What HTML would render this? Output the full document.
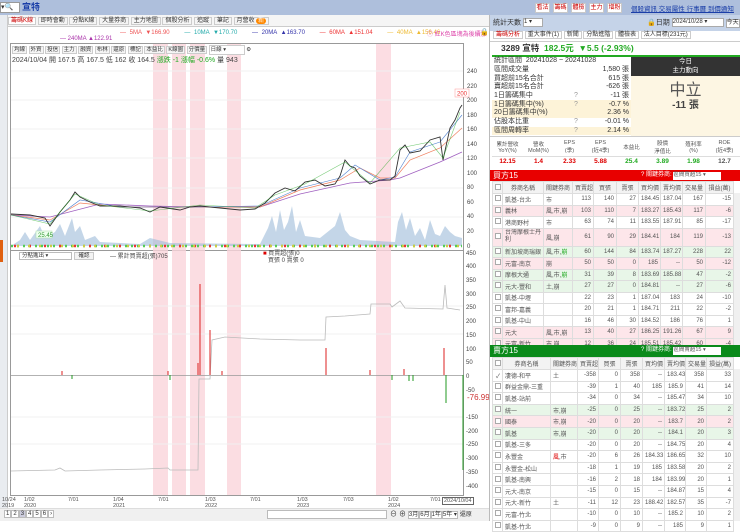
<!DOCTYPE html>
<html><head><meta charset="utf-8">
<style>
*{margin:0;padding:0;box-sizing:border-box}
body{width:740px;height:521px;overflow:hidden;background:#fff;font-family:"Liberation Sans","Noto Sans CJK TC",sans-serif;font-size:7px;color:#333;position:relative}
.a{position:absolute}
.btn{position:absolute;background:#f3f3f3;border:1px solid #c8c8c8;font-size:6px;line-height:9px;text-align:center;color:#333}
table{border-collapse:collapse;table-layout:fixed}
.tb td{border:1px solid #ddd;font-size:6px;white-space:nowrap;overflow:hidden;padding:0 2px;text-align:right;color:#555}
.tb td.l{text-align:left}
.tb td.c{text-align:center}
.r{color:#d00}.g{color:#2a2}
.pk td{background:#fde6ea}.gr td{background:#e8f6e8}
.cb{display:inline-block;width:6px;height:6px;border:1px solid #aaa;background:#fff}
.st td{font-size:7px;height:8.7px;line-height:8px;color:#333;padding:0 2px;white-space:nowrap;overflow:visible}
</style></head><body>

<div class="a" style="left:0;top:0;width:740px;height:15px;background:#aebfdc"></div>
<div class="a" style="left:0;top:2px;width:20px;height:11px;background:#fff;border:1px solid #999;font-size:7px;line-height:9px">▾🔍</div>
<div class="a" style="left:22px;top:2px;font-size:9px;font-weight:bold;color:#1a3ea8;line-height:11px">宣特</div>
<div class="btn" style="left:535px;top:3px;width:15px;height:10px;color:#c00;background:#fff">看法</div>
<div class="btn" style="left:553px;top:3px;width:15px;height:10px;color:#c00;background:#fff">籌碼</div>
<div class="btn" style="left:571px;top:3px;width:15px;height:10px;color:#c00;background:#fff">體檢</div>
<div class="btn" style="left:589px;top:3px;width:15px;height:10px;color:#c00;background:#fff">主力</div>
<div class="btn" style="left:607px;top:3px;width:15px;height:10px;color:#c00;background:#fff">增粉</div>
<div class="a" style="left:631px;top:3px;font-size:6.5px;color:#1a3ea8;text-decoration:underline;white-space:nowrap">個股資訊 交易屬性 行事曆 到價通知</div>

<div class="a" style="left:0;top:15px;width:8px;height:493px;background:#e9ecf0;border-right:1px solid #ccc"></div>
<div class="a" style="left:0;top:240px;width:3px;height:22px;background:#e06010"></div>

<div class="a" style="left:8px;top:15px;width:482px;height:12px;background:#f5f5f5;border-bottom:1px solid #ccc"></div>
<div class="a" style="left:8px;top:16px;font-size:6px;line-height:10px;white-space:nowrap">
<span style="border:1px solid #ccc;background:#fff;color:#c00;padding:0 2px">籌碼K線</span> <span style="border:1px solid #ccc;padding:0 2px">即時會動</span> <span style="border:1px solid #ccc;padding:0 2px">分點K線</span> <span style="border:1px solid #ccc;padding:0 2px">大量券商</span> <span style="border:1px solid #ccc;padding:0 2px">主力地圖</span> <span style="border:1px solid #ccc;padding:0 2px">個股分析</span> <span style="border:1px solid #ccc;padding:0 2px">追蹤</span> <span style="border:1px solid #ccc;padding:0 2px">筆記</span> <span style="border:1px solid #ccc;padding:0 2px">月營收 <span style="background:#f80;color:#fff;border-radius:4px;padding:0 2px">新</span></span></div>

<div class="a" style="left:120px;top:30px;font-size:6px;white-space:nowrap;word-spacing:2px"><span style="color:#e55">— 5MA ▼166.90</span>&nbsp;&nbsp;&nbsp; <span style="color:#2aa">— 10MA ▼170.70</span>&nbsp;&nbsp;&nbsp; <span style="color:#33a">— 20MA ▲163.70</span>&nbsp;&nbsp;&nbsp; <span style="color:#e33">— 60MA ▲151.04</span>&nbsp;&nbsp;&nbsp; <span style="color:#eb3">— 40MA ▲156.46</span></div>
<div class="a" style="left:427px;top:29px;font-size:6px;color:#d4a;white-space:nowrap">ⓘ 紅K色區塊為後續漲</div>
<div class="a" style="left:480px;top:28px;font-size:7px">🔒</div>
<div class="a" style="left:60px;top:36px;font-size:6px;color:#a3a;white-space:nowrap">— 240MA ▲122.91</div>

<svg class="a" style="left:0;top:0" width="490" height="521">
<rect x="10.5" y="43.5" width="453" height="207" fill="none" stroke="#999"/>
<rect x="10.5" y="250.5" width="453" height="245" fill="none" stroke="#999"/>
<g fill="#fbd5dc" opacity="0.8">
<rect x="153" y="44" width="15" height="451"/><rect x="172" y="44" width="14" height="451"/><rect x="190" y="44" width="15" height="451"/><rect x="227" y="44" width="14" height="451"/><rect x="376" y="44" width="15" height="451"/>
</g>
<g stroke="#f0f0f0"><line x1="11" y1="71" x2="463" y2="71"/><line x1="11" y1="100" x2="463" y2="100"/><line x1="11" y1="129" x2="463" y2="129"/><line x1="11" y1="158" x2="463" y2="158"/><line x1="11" y1="188" x2="463" y2="188"/><line x1="11" y1="217" x2="463" y2="217"/>
<line x1="11" y1="306" x2="463" y2="306"/><line x1="11" y1="334" x2="463" y2="334"/><line x1="11" y1="417" x2="463" y2="417"/><line x1="11" y1="444" x2="463" y2="444"/></g>
<polygon fill="#9dbbd8" opacity="0.6" points="11,246 20,240 25,232 30,240 40,226 45,238 55,232 60,224 65,236 72,218 75,232 80,226 85,240 95,236 100,242 140,244 150,238 170,243 260,244 268,228 272,216 276,232 280,210 284,230 288,222 292,206 296,232 300,220 305,236 320,238 335,226 340,212 345,230 350,236 360,240 395,242 398,222 402,212 406,230 410,218 415,236 420,228 425,240 430,220 435,234 440,236 445,226 450,232 455,236 462,238 462,246"/>
<g><path d="M11 246 H462" stroke="#5c5" stroke-width="2.5" stroke-dasharray="2 4"/><path d="M14 246 H462" stroke="#e33" stroke-width="2.5" stroke-dasharray="2 13"/><path d="M17 246 H462" stroke="#cc4" stroke-width="2.5" stroke-dasharray="2 9"/></g>
<polyline fill="none" stroke="#a060c0" stroke-width="0.8" points="11,215 50,217 100,204 150,206 200,207 260,207 300,194 350,183 390,180 400,178 440,162 462,152"/>
<polyline fill="none" stroke="#f08060" stroke-width="0.7" points="11,215 50,220 80,203 120,207 200,207 260,207 300,190 340,180 360,168 380,178 395,178 410,160 440,148 462,128"/>
<polyline fill="none" stroke="#5080d0" stroke-width="0.6" points="11,215 50,222 80,200 120,207 200,207 260,206 300,188 340,178 355,165 380,180 395,177 410,152 440,142 462,115"/>
<polyline fill="none" stroke="#333" stroke-width="0.9" points="11,214 30,215 45,218 50,226 60,212 70,200 75,192 80,197 90,202 100,206 120,206 140,208 150,212 160,207 180,210 190,207 200,206 220,208 240,210 255,209 265,203 275,193 285,188 295,191 305,182 315,180 325,186 335,184 340,176 345,160 350,166 355,168 360,176 370,184 380,180 390,180 395,176 400,150 405,145 410,153 420,151 430,140 440,137 443,160 450,128 455,120 460,108 462,105"/>
<polyline fill="none" stroke="#2a2" stroke-width="0.6" opacity="0.6" points="11,215 50,224 75,194 100,205 150,211 200,205 255,208 275,195 305,184 345,162 370,183 400,148 430,142 443,158 460,112"/>
<line x1="11" y1="375.5" x2="463" y2="375.5" stroke="#999" stroke-width="0.7"/>
<polyline fill="none" stroke="#bbb" stroke-width="0.8" points="11,471 55,470 60,468 65,471 100,470 145,469 168,468 170,470 198,470 199,379 210,379 212,340 225,337 260,339 300,340 325,340 326,317 345,316 370,314 371,304 390,304 392,307 400,301 405,308 443,309 445,285 447,308 460,310"/>
<g stroke="#d22" stroke-width="1"><line x1="200" y1="375" x2="200" y2="284"/><line x1="210" y1="375" x2="210" y2="330"/><line x1="198" y1="375" x2="198" y2="363"/><line x1="326" y1="375" x2="326" y2="348"/><line x1="444" y1="375" x2="444" y2="348"/><line x1="222" y1="375" x2="222" y2="371"/><line x1="168" y1="375" x2="168" y2="371"/><line x1="370" y1="375" x2="370" y2="370"/><line x1="404" y1="375" x2="404" y2="369"/><line x1="62" y1="375" x2="62" y2="371"/></g>
<g stroke="#292" stroke-width="1"><line x1="446" y1="375" x2="446" y2="403"/><line x1="463" y1="375" x2="463" y2="470"/><line x1="392" y1="375" x2="392" y2="380"/><line x1="409" y1="375" x2="409" y2="381"/><line x1="413" y1="375" x2="413" y2="381"/><line x1="170" y1="375" x2="170" y2="380"/><line x1="72" y1="375" x2="72" y2="379"/></g>
<g font-size="6" fill="#444" font-family="Liberation Sans">
<text x="467" y="73">240</text><text x="467" y="88">220</text><text x="467" y="102">200</text><text x="467" y="117">180</text><text x="467" y="131">160</text><text x="467" y="146">140</text><text x="467" y="160">120</text><text x="467" y="175">100</text><text x="467" y="189">80</text><text x="467" y="204">60</text><text x="467" y="218">40</text><text x="467" y="233">20</text><text x="467" y="248">0</text>
<text x="466" y="255">450</text><text x="466" y="268">400</text><text x="466" y="282">350</text><text x="466" y="296">300</text><text x="466" y="309">250</text><text x="466" y="323">200</text><text x="466" y="337">150</text><text x="466" y="351">100</text><text x="466" y="364">50</text><text x="466" y="378">0</text><text x="466" y="392">-50</text><text x="466" y="419">-150</text><text x="466" y="433">-200</text><text x="466" y="446">-250</text><text x="466" y="460">-300</text><text x="466" y="474">-350</text><text x="466" y="488">-400</text>
</g>
<text x="467" y="400" font-size="8" fill="#c33" font-family="Liberation Sans">-76.99</text>
<rect x="455" y="89" width="14" height="8" fill="#fff" stroke="#f99" stroke-width="0.5"/><text x="457" y="95.5" font-size="6" fill="#e33">200</text>
<rect x="36" y="231" width="16" height="7" fill="#efe" stroke="#ada" stroke-width="0.5"/><text x="38" y="237" font-size="6" fill="#393">25.45</text>
</svg>

<div class="a" style="left:12px;top:45px;font-size:5.5px;line-height:8px;white-space:nowrap"><span style="border:1px solid #ccc;background:#f5f5f5;padding:0 1px">均線</span> <span style="border:1px solid #ccc;background:#f5f5f5;padding:0 1px">外資</span> <span style="border:1px solid #ccc;background:#f5f5f5;padding:0 1px">投信</span> <span style="border:1px solid #ccc;background:#f5f5f5;padding:0 1px">主力</span> <span style="border:1px solid #ccc;background:#f5f5f5;padding:0 1px">融資</span> <span style="border:1px solid #ccc;background:#f5f5f5;padding:0 1px">布林</span> <span style="border:1px solid #ccc;background:#f5f5f5;padding:0 1px">還原</span> <span style="border:1px solid #ccc;background:#f5f5f5;padding:0 1px">標記</span> <span style="border:1px solid #ccc;background:#f5f5f5;padding:0 1px">本益比</span> <span style="border:1px solid #ccc;background:#f5f5f5;padding:0 1px">K線圖</span> <span style="border:1px solid #ccc;background:#f5f5f5;padding:0 1px">分價量</span> <span style="border:1px solid #ccc;background:#fff;padding:0 1px;display:inline-block;width:36px">日線 ▾</span> ⚙</div>
<div class="a" style="left:12px;top:55px;font-size:7px;white-space:nowrap;color:#444">2024/10/04 開 167.5 高 167.5 低 162 收 164.5 <span class="g">漲跌 -1</span> <span class="g">漲幅 -0.6%</span> 量 943</div>
<div class="a" style="left:19px;top:252px;width:53px;height:8px;border:1px solid #bbb;font-size:5.5px;line-height:6px;padding-left:2px;background:#fff">分點進出 ▾</div>
<div class="btn" style="left:74px;top:252px;width:20px;height:8px;line-height:6px;font-size:5.5px">確認</div>
<div class="a" style="left:110px;top:251px;font-size:6px;color:#444;white-space:nowrap">— 累計買賣超(張)705</div>
<div class="a" style="left:263px;top:251px;font-size:6px;color:#444;line-height:7px;white-space:nowrap"><span class="r">■</span> 買賣超(張)0<br>&nbsp;&nbsp;&nbsp;買張 0 賣張 0</div>

<div class="a" style="left:0;top:497px;width:490px;font-size:5.5px;line-height:6px;color:#555">
<span class="a" style="left:2px">10/24<br>2019</span><span class="a" style="left:24px">1/02<br>2020</span><span class="a" style="left:68px">7/01</span><span class="a" style="left:113px">1/04<br>2021</span><span class="a" style="left:158px">7/01</span><span class="a" style="left:205px">1/03<br>2022</span><span class="a" style="left:250px">7/01</span><span class="a" style="left:297px">1/03<br>2023</span><span class="a" style="left:343px">7/03</span><span class="a" style="left:388px">1/02<br>2024</span><span class="a" style="left:430px">7/01</span><span class="a" style="left:442px;border:1px solid #666;padding:0 1px;background:#fff;white-space:nowrap">2024/10/04</span></div>
<div class="a" style="left:0;top:508px;width:490px;height:13px;background:#f0f0f0;border-top:1px solid #ddd"></div>
<div class="a" style="left:4px;top:510px;font-size:6px;line-height:8px;white-space:nowrap"><span style="border:1px solid #bbb;padding:0 1px;background:#fff">1</span><span style="border:1px solid #bbb;padding:0 1px;background:#fff">2</span><span style="border:1px solid #bbb;padding:0 1px;background:#ccd">3</span><span style="border:1px solid #bbb;padding:0 1px;background:#fff">4</span><span style="border:1px solid #bbb;padding:0 1px;background:#fff">5</span><span style="border:1px solid #bbb;padding:0 1px;background:#fff">6</span><span style="border:1px solid #bbb;padding:0 1px;background:#fff">›</span></div>
<div class="a" style="left:267px;top:510px;width:120px;height:9px;border:1px solid #bbb;background:#fff"></div>
<div class="a" style="left:390px;top:509px;font-size:7px;white-space:nowrap">⊖ ⊕ <span style="font-size:6px;border:1px solid #bbb;background:#fff">3月</span><span style="font-size:6px;border:1px solid #bbb;background:#fff">6月</span><span style="font-size:6px;border:1px solid #bbb;background:#fff">1年</span><span style="font-size:6px;border:1px solid #bbb;background:#fff">5年 ▾</span> <span style="font-size:6px">還原</span></div>

<div class="a" style="left:490px;top:15px;width:250px;height:16px;background:#c5d3e8"></div>
<div class="a" style="left:493px;top:18px;font-size:7px;line-height:10px;white-space:nowrap">統計天數 <span style="display:inline-block;width:20px;height:9px;background:#fff;border:1px solid #aaa;vertical-align:middle;font-size:6px;line-height:7px">1 ▾</span></div>
<div class="a" style="left:647px;top:18px;font-size:7px;line-height:10px;white-space:nowrap">🔒日期 <span style="display:inline-block;width:52px;height:9px;background:#fff;border:1px solid #aaa;vertical-align:middle;font-size:6px;line-height:7px">2024/10/28 ▾</span> <span style="display:inline-block;border:1px solid #aaa;background:#fff;font-size:6px;line-height:7px">今天</span></div>
<div class="a" style="left:490px;top:31px;width:250px;height:11px;border-bottom:1px solid #ccc;font-size:6px;line-height:9px;white-space:nowrap;padding-left:3px"><span style="border:1px solid #ccc;color:#c00;padding:0 2px">籌碼分析</span> <span style="border:1px solid #ccc;padding:0 2px">重大事件(1)</span> <span style="border:1px solid #ccc;padding:0 2px">新聞</span> <span style="border:1px solid #ccc;padding:0 2px">分點進階</span> <span style="border:1px solid #ccc;padding:0 2px">體檢表</span> <span style="border:1px solid #ccc;padding:0 2px">法人目標(231元)</span></div>
<div class="a" style="left:501px;top:43px;font-size:8.5px;font-weight:bold;white-space:nowrap;line-height:11px">3289 宣特 &nbsp;<span style="color:#2a2">182.5元 &nbsp;▼5.5 (-2.93%)</span></div>
<div class="a" style="left:492px;top:55px;width:248px;height:1.5px;background:#2a2"></div>
<table class="a st" style="left:492px;top:57px;width:139px">
<colgroup><col style="width:80px"><col style="width:20px"><col style="width:39px"></colgroup>
<tr><td colspan="3">統計區間 &nbsp;20241028 ~ 20241028</td></tr>
<tr><td>區間成交量</td><td></td><td style="text-align:right">1,580 張</td></tr>
<tr><td>買超前15名合計</td><td></td><td style="text-align:right">615 張</td></tr>
<tr><td>賣超前15名合計</td><td></td><td style="text-align:right">-626 張</td></tr>
<tr><td>1日籌碼集中</td><td style="color:#999">?</td><td style="text-align:right">-11 張</td></tr>
<tr style="background:#fdf3d8"><td>1日籌碼集中(%)</td><td style="color:#999">?</td><td style="text-align:right">-0.7 %</td></tr>
<tr style="background:#fdf3d8"><td>20日籌碼集中(%)</td><td></td><td style="text-align:right">2.36 %</td></tr>
<tr><td>佔股本比重</td><td style="color:#999">?</td><td style="text-align:right">-0.01 %</td></tr>
<tr style="background:#fdf3d8"><td>區間周轉率</td><td style="color:#999">?</td><td style="text-align:right">2.14 %</td></tr>
</table>
<div class="a" style="left:631px;top:57px;width:109px;height:19px;background:#333;color:#fff;font-size:6.5px;text-align:center;line-height:9px">今日<br>主力動向</div>
<div class="a" style="left:631px;top:76px;width:109px;height:60px;background:#fdf6e3;text-align:center"><div style="font-size:16px;color:#555;margin-top:6px;line-height:18px">中立</div><div style="font-size:10px;font-weight:bold;color:#444;line-height:12px">-11 張</div></div>
<div class="a" style="left:490px;top:136px;width:250px;height:1px;background:#ccc"></div>
<table class="a" style="left:492px;top:138px;width:248px;font-size:5.5px;text-align:center;color:#555">
<tr style="height:18px;border-bottom:1px solid #ddd"><td>累計營收<br>YoY(%)</td><td>營收<br>MoM(%)</td><td>EPS<br>(季)</td><td>EPS<br>(近4季)</td><td>本益比</td><td>股價<br>淨值比</td><td>殖利率<br>(%)</td><td>ROE<br>(近4季)</td></tr>
<tr style="height:10px;font-size:6.5px;font-weight:bold"><td class="r">12.15</td><td class="r">1.4</td><td class="r">2.33</td><td class="r">5.88</td><td class="g">25.4</td><td class="g">3.89</td><td class="g">1.98</td><td>12.7</td></tr>
</table>

<div class="a" style="left:490px;top:170px;width:250px;height:11px;background:#e80000;color:#fff;font-size:8px;line-height:11px;padding-left:3px">買方15</div>
<div class="a" style="left:641px;top:171px;font-size:6px;color:#fff;line-height:9px;white-space:nowrap">? 關鍵券商: <span style="display:inline-block;width:48px;height:8px;background:#fff;color:#555;line-height:7px;font-size:5.5px">區間買超15 ▾</span></div>
<table class="a tb" style="left:492px;top:181px;width:241px">
<colgroup><col style="width:10px"><col style="width:41px"><col style="width:29px"><col style="width:21px"><col style="width:23px"><col style="width:22px"><col style="width:22px"><col style="width:22px"><col style="width:23px"><col style="width:28px"></colgroup>
<tr style="height:12px;background:#f3f3f3"><td class="c"><span class="cb"></span></td><td class="c">券商名稱</td><td class="c">關鍵券商</td><td class="c">買賣超</td><td class="c">買張</td><td class="c">賣張</td><td class="c">買均價</td><td class="c">賣均價</td><td class="c">交易量</td><td class="c">損益(萬)</td></tr>
<tr style="height:11.5px"><td><span class="cb"></span></td><td class="l">凱基-台北</td><td class="l">市</td><td>113</td><td>140</td><td>27</td><td>184.45</td><td>187.04</td><td>167</td><td>-15</td></tr>
<tr class="pk" style="height:11.5px"><td><span class="cb"></span></td><td class="l">義林</td><td class="l r">風,市,崩</td><td>103</td><td>110</td><td>7</td><td>183.27</td><td>185.43</td><td>117</td><td>-6</td></tr>
<tr style="height:11.5px"><td><span class="cb"></span></td><td class="l">港商野村</td><td class="l">市</td><td>63</td><td>74</td><td>11</td><td>183.55</td><td>187.91</td><td>85</td><td>-17</td></tr>
<tr class="pk" style="height:18px"><td><span class="cb"></span></td><td class="l" style="white-space:normal;line-height:7px">台灣摩根士丹利</td><td class="l r">風,崩</td><td>61</td><td>90</td><td>29</td><td>184.41</td><td>184</td><td>119</td><td>-13</td></tr>
<tr class="gr" style="height:11.5px"><td><span class="cb"></span></td><td class="l">新加坡商瑞銀</td><td class="l r">風,市,<span class="g">崩</span></td><td>60</td><td>144</td><td>84</td><td>183.74</td><td>187.27</td><td>228</td><td>22</td></tr>
<tr class="pk" style="height:11.5px"><td><span class="cb"></span></td><td class="l">元富-南京</td><td class="l r">崩</td><td>50</td><td>50</td><td>0</td><td>185</td><td>--</td><td>50</td><td>-12</td></tr>
<tr class="gr" style="height:11.5px"><td><span class="cb"></span></td><td class="l">摩根大通</td><td class="l r">風,市,<span class="g">崩</span></td><td>31</td><td>39</td><td>8</td><td>183.69</td><td>185.88</td><td>47</td><td>-2</td></tr>
<tr class="gr" style="height:11.5px"><td><span class="cb"></span></td><td class="l">元大-豐和</td><td class="l g">土,崩</td><td>27</td><td>27</td><td>0</td><td>184.81</td><td>--</td><td>27</td><td>-6</td></tr>
<tr style="height:11.5px"><td><span class="cb"></span></td><td class="l">凱基-中壢</td><td></td><td>22</td><td>23</td><td>1</td><td>187.04</td><td>183</td><td>24</td><td>-10</td></tr>
<tr style="height:11.5px"><td><span class="cb"></span></td><td class="l">富邦-嘉義</td><td></td><td>20</td><td>21</td><td>1</td><td>184.71</td><td>211</td><td>22</td><td>-2</td></tr>
<tr style="height:11.5px"><td><span class="cb"></span></td><td class="l">凱基-中山</td><td></td><td>16</td><td>46</td><td>30</td><td>184.52</td><td>186</td><td>76</td><td>1</td></tr>
<tr class="pk" style="height:11.5px"><td><span class="cb"></span></td><td class="l">元大</td><td class="l r">風,市,崩</td><td>13</td><td>40</td><td>27</td><td>186.25</td><td>191.26</td><td>67</td><td>9</td></tr>
<tr class="pk" style="height:11.5px"><td><span class="cb"></span></td><td class="l">元富-新竹</td><td class="l r">市,崩</td><td>12</td><td>36</td><td>24</td><td>185.51</td><td>185.42</td><td>60</td><td>-4</td></tr>
</table>
<div class="a" style="left:733px;top:193px;width:7px;height:152px;background:#f0f0f0;border-left:1px solid #ddd"></div>

<div class="a" style="left:490px;top:345px;width:250px;height:12px;background:#0a8a1a;color:#fff;font-size:8px;line-height:12px;padding-left:3px">賣方15</div>
<div class="a" style="left:641px;top:346px;font-size:6px;color:#fff;line-height:9px;white-space:nowrap">? 關鍵券商: <span style="display:inline-block;width:48px;height:8px;background:#fff;color:#555;line-height:7px;font-size:5.5px">區間賣超15 ▾</span></div>
<table class="a tb" style="left:492px;top:357px;width:241px">
<colgroup><col style="width:10px"><col style="width:48px"><col style="width:27px"><col style="width:21px"><col style="width:22px"><col style="width:22px"><col style="width:22px"><col style="width:21px"><col style="width:21px"><col style="width:27px"></colgroup>
<tr style="height:12px;background:#f3f3f3"><td class="c"><span class="cb"></span></td><td class="c">券商名稱</td><td class="c">關鍵券商</td><td class="c">買賣超</td><td class="c">買張</td><td class="c">賣張</td><td class="c">買均價</td><td class="c">賣均價</td><td class="c">交易量</td><td class="c">損益(萬)</td></tr>
<tr style="height:11.6px"><td>✓</td><td class="l">凄德-和平</td><td class="l g">土</td><td>-358</td><td>0</td><td>358</td><td>--</td><td>183.43</td><td>358</td><td>33</td></tr>
<tr style="height:11.6px"><td><span class="cb"></span></td><td class="l">群益金鼎-三重</td><td></td><td>-39</td><td>1</td><td>40</td><td>185</td><td>185.9</td><td>41</td><td>14</td></tr>
<tr style="height:11.6px"><td><span class="cb"></span></td><td class="l">凱基-站前</td><td></td><td>-34</td><td>0</td><td>34</td><td>--</td><td>185.47</td><td>34</td><td>10</td></tr>
<tr class="gr" style="height:11.6px"><td><span class="cb"></span></td><td class="l">統一</td><td class="l g">市,崩</td><td>-25</td><td>0</td><td>25</td><td>--</td><td>183.72</td><td>25</td><td>2</td></tr>
<tr class="pk" style="height:11.6px"><td><span class="cb"></span></td><td class="l">國泰</td><td class="l r">市,崩</td><td>-20</td><td>0</td><td>20</td><td>--</td><td>183.7</td><td>20</td><td>2</td></tr>
<tr class="gr" style="height:11.6px"><td><span class="cb"></span></td><td class="l">凱基</td><td class="l g">市,崩</td><td>-20</td><td>0</td><td>20</td><td>--</td><td>184.1</td><td>20</td><td>3</td></tr>
<tr style="height:11.6px"><td><span class="cb"></span></td><td class="l">凱基-三多</td><td></td><td>-20</td><td>0</td><td>20</td><td>--</td><td>184.75</td><td>20</td><td>4</td></tr>
<tr style="height:11.6px"><td><span class="cb"></span></td><td class="l">永豐金</td><td class="l"><span class="r">風</span>,市</td><td>-20</td><td>6</td><td>26</td><td>184.33</td><td>186.65</td><td>32</td><td>10</td></tr>
<tr style="height:11.6px"><td><span class="cb"></span></td><td class="l">永豐金-松山</td><td></td><td>-18</td><td>1</td><td>19</td><td>185</td><td>183.58</td><td>20</td><td>2</td></tr>
<tr style="height:11.6px"><td><span class="cb"></span></td><td class="l">凱基-南興</td><td></td><td>-16</td><td>2</td><td>18</td><td>184</td><td>183.99</td><td>20</td><td>1</td></tr>
<tr style="height:11.6px"><td><span class="cb"></span></td><td class="l">元大-南京</td><td></td><td>-15</td><td>0</td><td>15</td><td>--</td><td>184.87</td><td>15</td><td>4</td></tr>
<tr style="height:11.6px"><td><span class="cb"></span></td><td class="l">元大-新竹</td><td class="l g">土</td><td>-11</td><td>12</td><td>23</td><td>188.42</td><td>182.57</td><td>35</td><td>-7</td></tr>
<tr style="height:11.6px"><td><span class="cb"></span></td><td class="l">元富-竹北</td><td></td><td>-10</td><td>0</td><td>10</td><td>--</td><td>185.2</td><td>10</td><td>2</td></tr>
<tr style="height:11.6px"><td><span class="cb"></span></td><td class="l">凱基-竹北</td><td></td><td>-9</td><td>0</td><td>9</td><td>--</td><td>185</td><td>9</td><td>1</td></tr>
</table>
<div class="a" style="left:733px;top:369px;width:7px;height:152px;background:#f0f0f0;border-left:1px solid #ddd"></div>
<div class="a" style="left:489px;top:15px;width:1px;height:506px;background:#bbb"></div>
</body></html>
